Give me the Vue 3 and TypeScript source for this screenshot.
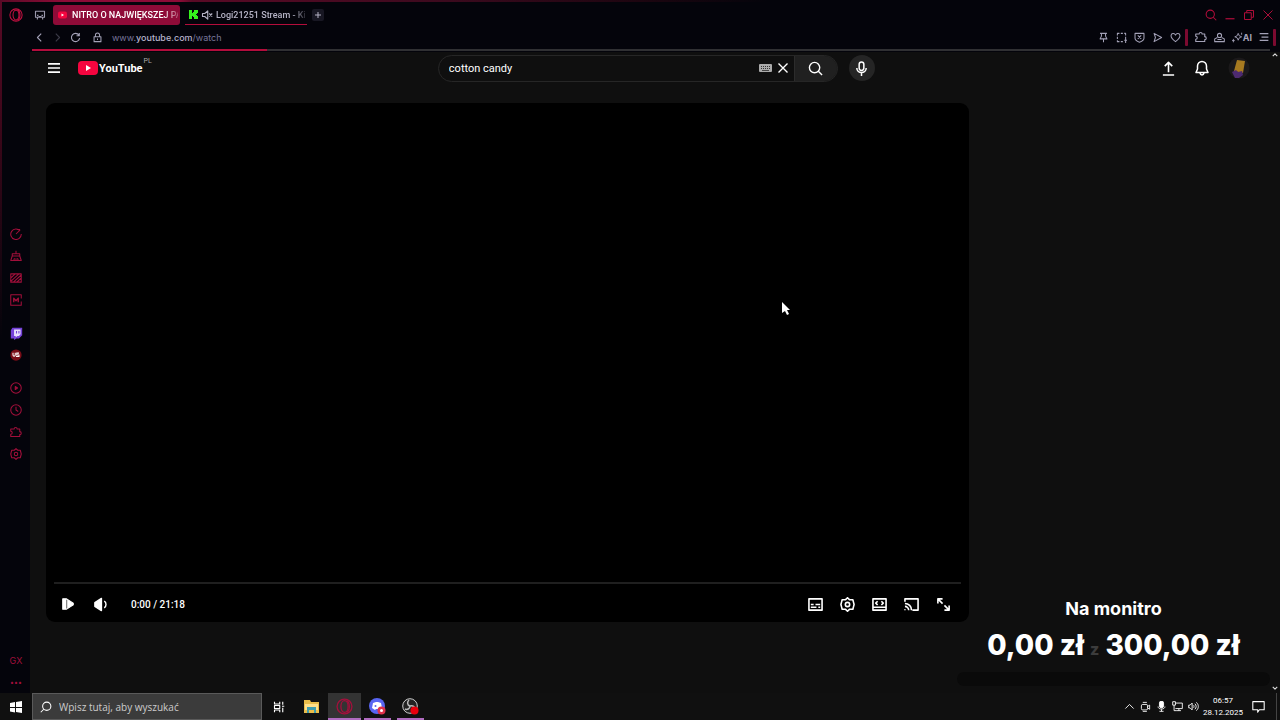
<script setup lang="ts">
import { h, ref } from 'vue'

const shapes: Record<string, string> = {
  opera: '<circle cx="8" cy="8" r="7"/><ellipse cx="8" cy="8" rx="3.4" ry="5.6"/><path d="M10 2.4c3.4 1.6 3.4 9.6 0 11.2"/>',
  workspace: '<path d="M2 3h12v8H2zM4.500 11v3M11.500 11v3M4 8.500h2M10 8.500h2M6 10h4"/>',
  back: '<path d="M10.500 2.500L5 8l5.500 5.500"/>',
  forward: '<path d="M5.500 2.500L11 8l-5.500 5.500"/>',
  reload: '<path d="M13 4.500A6 6 0 1 0 14 9M13.500 1.500v4h-4"/>',
  lock: '<path d="M3 7h10v7H3zM5 7V4.500a3 3 0 0 1 6 0V7M8 9.500v2"/>',
  muted: '<path d="M2 6v4h3l4 3.500v-11L5 6zM11 6l4 4M15 6l-4 4"/>',
  search: '<circle cx="7" cy="7" r="5.500"/><path d="M11 11l4 4"/>',
  minimise: '<path d="M2 13h12"/>',
  restore: '<path d="M2 5h9v9H2zM5 5V2h9v9h-3"/>',
  close: '<path d="M2 2l12 12M14 2L2 14"/>',
  plus: '<path d="M8 2v12M2 8h12"/>',
  pin: '<path d="M3 2h10M5 2v4L3 10h10l-2-4V2M8 10v5"/>',
  snapshot: '<path d="M2 5V2h3M7 2h3M12 2h2v3M14 7v3M2 7v3M2 12v2h3M7 14h3M12 12h4M14 10v6"/>',
  shield: '<path d="M1.500 2h13v7c0 3-3 4.500-6.500 6-3.500-1.500-6.500-3-6.500-6zM5.500 5l5 5M10.500 5l-5 5"/>',
  send: '<path d="M3 2l11 6-11 6 2-6z"/>',
  heart: '<path d="M8 14C4 11 1.500 8.500 1.500 5.500c0-4 5-4.500 6.500-1 1.500-3.500 6.500-3 6.500 1C14.500 8.500 12 11 8 14z"/>',
  puzzle: '<path d="M1 4h4.500a2 2 0 1 1 4 0H13v3.500a2 2 0 1 1 0 4V14H1v-3a2 2 0 0 0 0-4z"/>',
  profile: '<circle cx="8" cy="5" r="3"/><path d="M5 8l-4 2v4h14v-4l-4-2M5 11h6"/>',
  sparkle: '<path d="M9 2l1.500 3.500L14 7l-3.500 1.500L9 12 7.500 8.500 4 7l3.500-1.500zM2 10v5M0 12.500h4M14 1v3"/>',
  lines: '<path d="M1 2.500h14M4 8h11M1 13.500h14"/>',
  menu: '<path d="M0 2.500h16M0 8h16M0 13.500h16"/>',
  upload: '<path d="M8 12V2M4 5.500L8 1.500l4 4M2 15h12"/>',
  bell: '<path d="M8 1.500a4.500 4.500 0 0 0-4.500 4.500v3L2 12.500h12L12.500 9V6A4.500 4.500 0 0 0 8 1.500zM6 13c.5 2.500 3.500 2.500 4 0"/>',
  mic: '<rect x="5.500" y="1" width="5" height="9" rx="2.500"/><path d="M3 7.500c0 6.500 10 6.500 10 0M8 12.500V16"/>',
  gauge: '<path d="M13.500 4A7 7 0 1 0 15 8M8 8l5-5M9 2h4.500"/>',
  cleaner: '<path d="M8 1v4M3 5h10v3H3zM3 8l-2 6h14l-2-6M5 14l1-3M8 14v-3M11 14l-1-3"/>',
  blocks: '<path d="M1 2.500h14v11H1zM1 8l6-5.500M1 12.500L12 2.500M4.500 13.500L15 4M9 13.500l6-5.500"/>',
  mods: '<path d="M15 10v5H1V1h14v5"/><path d="M5 11V5.500L8 9l3-3.500V11" stroke-width="1.800"/>',
  player: '<circle cx="8" cy="8" r="7"/><path d="M7 6l3 2-3 2z" fill="currentColor"/>',
  history: '<circle cx="8" cy="8" r="7"/><path d="M8 3.500V8l3 2"/>',
  gear: '<path d="M8 .8l2.300 2.200h3.400l.8 3L15 8l-.5 2-.8 3h-3.400L8 15.200 5.700 13H2.300l-.8-3L1 8l.5-2 .8-3h3.400z"/><circle cx="8" cy="8" r="2.300"/>',
  play: '<path d="M2 2h4v12H2zM6 2l8 5v2l-8 5z" fill="currentColor"/><path d="M6.500 3v10" stroke="#777"/>',
  volume: '<path d="M9 1.500v13L2 10V6z" fill="currentColor"/><path d="M12 4.500c2.500 1.500 2.500 5.500 0 7"/>',
  captions: '<path d="M1 2h14v12H1zM3 8h3M8 8h5M3 11h6M11 11h2"/>',
  theatre: '<path d="M1 2h14v9H1zM1 14h14v-3H1zM6 4.500L4 6.500l2 2M10 4.500l2 2-2 2"/>',
  cast: '<path d="M1 5V2h14v12H9M1 7c4 0 7 3 7 7M1 10c2 0 4 2 4 4M1 13v1"/>',
  expand: '<path d="M2 7V2h5M2 2l5 5M14 9v5H9M14 14L9 9"/>',
  taskview: '<path d="M2 1v3h7V1M2 15v-3h7v3M2 6h7v4H2zM13 1v4M13 9v6M12 7h3"/>',
  up: '<path d="M2 11l6-6 6 6"/>',
  down: '<path d="M2 5l6 6 6-6"/>',
  device: '<rect x="2" y="5" width="9" height="8" rx="2"/><path d="M11 8l3-2v6l-3-2M4 2h6M4 15.500h6"/>',
  mictray: '<rect x="5" y="0" width="6" height="10" rx="3" fill="currentColor"/><path d="M3 8c0 5 10 5 10 0M8 12v3M5 15h6"/>',
  network: '<path d="M5 3h10v8H5M1 1h4v5H1zM3 6v8h4M10 11v3M7 14h6"/>',
  sound: '<path d="M1 6v4h2l3 3V3L3 6zM8 6c1 1 1 3 0 4M10 4c2.500 2 2.500 6 0 8M12 2c4 3 4 9 0 12"/>',
  notice: '<path d="M1 2h14v10H9l-2 3v-3H1z"/>',
}

const Icon = (p: { name: string; size?: number; weight?: number }) =>
  h('svg', {
    viewBox: '0 0 16 16', width: p.size ?? 12, height: p.size ?? 12, fill: 'none', stroke: 'currentColor',
    'stroke-width': p.weight ?? 1.3, 'stroke-linejoin': 'round', 'aria-hidden': 'true', innerHTML: shapes[p.name],
  })
Icon.props = ['name', 'size', 'weight']

const query = ref('cotton candy')
const taskQuery = ref('')
const sideTools = [['gauge', 'GX Control'], ['cleaner', 'GX Cleaner'], ['blocks', 'GX Corner'], ['mods', 'GX Mods']]
const sideLinks = [['player', 'Odtwarzacz'], ['history', 'Historia'], ['puzzle', 'Rozszerzenia'], ['gear', 'Ustawienia']]
const pageTools = [['pin', 'Przypnij'], ['snapshot', 'Zrzut'], ['shield', 'Ochrona'], ['send', 'Wyślij'], ['heart', 'Ulubione']]
const playerTools = [['captions', 'Napisy'], ['gear', 'Ustawienia'], ['theatre', 'Tryb kinowy'], ['cast', 'Przesyłaj'], ['expand', 'Pełny ekran']]
const tray = [['up', 'Ukryte ikony'], ['device', 'Kamera'], ['mictray', 'Mikrofon'], ['network', 'Sieć'], ['sound', 'Głośność']]
</script>

<template>
  <div class="desktop">
    <div class="browser">
      <aside class="sidebar">
        <button class="opera" aria-label="Opera"><Icon name="opera" :size="14" :weight="1.2" /></button>
        <nav class="tools">
          <div class="group">
            <button v-for="t in sideTools" :key="t[0]" :aria-label="t[1]"><Icon :name="t[0]" :weight="1.4" /></button>
          </div>
          <div class="group">
            <button aria-label="Twitch">
              <svg width="13" height="13" viewBox="0 0 16 16"><path d="M3 1h12v9l-4 4H8l-3 2v-2H1V4z" fill="#7441d8" /><path d="M5 3h8v6l-2 2H9l-2 2v-2H5z" fill="#e8defc" /><path d="M8 5v3M11 5v3" stroke="#7441d8" stroke-width="1.300" /></svg>
            </button>
            <button aria-label="Aplikacja">
              <svg width="12" height="12" viewBox="0 0 16 16"><circle cx="8" cy="8" r="7.500" fill="#790d18" /><path d="M4 5v3c0 2 3 2 3 0V5M12 5.500H9v2.500h3v2H8" fill="none" stroke="#fff" stroke-width="1.400" /></svg>
            </button>
          </div>
          <div class="group">
            <button v-for="t in sideLinks" :key="t[0]" :aria-label="t[1]"><Icon :name="t[0]" :weight="1.4" /></button>
          </div>
        </nav>
        <div class="side-end">
          <button class="gx">GX</button>
          <button class="gx">•••</button>
        </div>
      </aside>

      <div class="window">
        <div class="tabs">
          <button class="space" aria-label="Obszar roboczy"><Icon name="workspace" :weight="1.5" /></button>
          <button class="tab active">
            <svg width="9" height="8" viewBox="0 0 18 14"><rect width="18" height="14" rx="4" fill="#f5053f" /><path d="M7 4l5 3-5 3z" fill="#fff" /></svg>
            <span>NITRO O NAJWIĘKSZEJ PA</span>
          </button>
          <button class="tab">
            <svg width="9" height="9" viewBox="0 0 9 9"><path d="M0 0h3v3h1V2h1V0h4v3H8v1H7v1h1v1h1v3H5V7H4V6H3v3H0z" fill="#35f21c" /></svg>
            <Icon name="muted" :size="12" :weight="1.5" />
            <span>Logi21251 Stream - Kic</span>
          </button>
          <button class="new-tab" aria-label="Nowa karta"><Icon name="plus" :size="8" :weight="2" /></button>
          <div class="controls">
            <button aria-label="Szukaj"><Icon name="search" :weight="1.4" /></button>
            <button aria-label="Minimalizuj"><Icon name="minimise" :weight="1.6" /></button>
            <button aria-label="Przywróć"><Icon name="restore" /></button>
            <button aria-label="Zamknij"><Icon name="close" /></button>
          </div>
        </div>

        <div class="address">
          <button aria-label="Wstecz"><Icon name="back" :size="11" :weight="1.6" /></button>
          <button class="dim" aria-label="Dalej"><Icon name="forward" :size="11" :weight="1.6" /></button>
          <button aria-label="Odśwież"><Icon name="reload" :size="11" :weight="1.6" /></button>
          <button class="lock" aria-label="Bezpieczeństwo"><Icon name="lock" :size="11" :weight="1.5" /></button>
          <a class="url" href="#">www.<b>youtube.com</b>/watch</a>
          <div class="page-tools">
            <button v-for="t in pageTools" :key="t[0]" :aria-label="t[1]"><Icon :name="t[0]" :size="11" :weight="1.5" /></button>
            <i class="mark"></i>
            <button class="after" aria-label="Rozszerzenia"><Icon name="puzzle" :weight="1.5" /></button>
            <button aria-label="Profil"><Icon name="profile" :size="11" :weight="1.5" /></button>
            <button class="ai"><Icon name="sparkle" :size="11" />AI</button>
            <button aria-label="Menu"><Icon name="lines" :size="10" :weight="2" /></button>
            <i class="mark"></i>
          </div>
        </div>
        <div class="loading"><i></i></div>

        <div class="viewport">
          <div class="page">
            <header class="masthead">
              <div class="brand">
                <button aria-label="Menu"><Icon name="menu" :weight="2.2" /></button>
                <a href="#" class="logo">
                  <svg width="20" height="14" viewBox="0 0 20 14"><rect width="20" height="14" rx="4" fill="#f5053f" /><path d="M8 4l5 3-5 3z" fill="#fff" /></svg>
                  <span>YouTube</span><sup>PL</sup>
                </a>
              </div>
              <form class="finder" @submit.prevent>
                <div class="field">
                  <input v-model="query" type="text" aria-label="Szukaj" />
                  <svg width="13" height="8" viewBox="0 0 13 8"><rect width="13" height="8" rx="1" fill="#aaa" /><path d="M2 2.500h9M2 4.500h9" stroke="#333" stroke-dasharray="1 1" /><path d="M3 6.500h7" stroke="#444" /></svg>
                  <button type="button" class="clear" aria-label="Wyczyść"><Icon name="close" :size="12" :weight="1.8" /></button>
                  <button class="go" aria-label="Szukaj"><Icon name="search" :size="15" :weight="1.5" /></button>
                </div>
                <button type="button" class="voice" aria-label="Szukaj głosowo"><Icon name="mic" :size="15" :weight="1.6" /></button>
              </form>
              <div class="account">
                <button aria-label="Prześlij"><Icon name="upload" :size="15" :weight="1.7" /></button>
                <button aria-label="Powiadomienia"><Icon name="bell" :size="16" :weight="1.5" /></button>
                <button aria-label="Konto">
                  <svg width="22" height="22" viewBox="0 0 22 22"><circle cx="11" cy="11" r="10.500" fill="#1b191a" /><path d="M9 3l8 1-2 12-9-2z" fill="#a77a20" /><path d="M4 15l4-2 2 2 4-1 1 4-4 3H7z" fill="#4d2a70" /></svg>
                </button>
              </div>
            </header>

            <section class="player">
              <div class="track"></div>
              <div class="deck">
                <button aria-label="Odtwórz"><Icon name="play" :size="14" /></button>
                <button aria-label="Głośność"><Icon name="volume" :size="15" :weight="1.5" /></button>
                <span class="time">0:00 / 21:18</span>
                <div class="options">
                  <button v-for="t in playerTools" :key="t[0]" :aria-label="t[1]"><Icon :name="t[0]" :size="15" :weight="1.7" /></button>
                </div>
              </div>
            </section>
          </div>
          <div class="scroll"><Icon name="up" :size="6" :weight="3" /><Icon name="down" :size="6" :weight="3" /></div>
        </div>
      </div>

      <div class="goal">
        <h2>Na monitro</h2>
        <p>0,00 zł <small>z</small> 300,00 zł</p>
        <div class="meter"></div>
      </div>
    </div>

    <footer class="taskbar">
      <button class="start" aria-label="Start">
        <svg width="12" height="12" viewBox="0 0 12 12" fill="#fff"><path d="M0 2l5-1v5H0zM6 1l6-1v6H6zM0 7h5v4.500l-5-1zM6 7h6v5l-6-1z" /></svg>
      </button>
      <label class="lookup">
        <Icon class="lens" name="search" :size="12" :weight="1.4" />
        <input v-model="taskQuery" type="text" placeholder="Wpisz tutaj, aby wyszukać" aria-label="Wyszukaj" />
      </label>
      <button class="app" aria-label="Widok zadań"><Icon name="taskview" :weight="1.5" /></button>
      <button class="app" aria-label="Eksplorator">
        <svg width="15" height="13" viewBox="0 0 15 13"><path d="M0 0h6l1 2h8v11H0z" fill="#e9bd4a" /><path d="M1 4h13v6H1z" fill="#ffe08a" /><path d="M3 7h9v6h-2v-3H5v3H3z" fill="#3f9dae" /></svg>
      </button>
      <button class="app open current" aria-label="Opera GX"><Icon class="red" name="opera" :size="17" :weight="1.2" /></button>
      <button class="app open" aria-label="Discord">
        <svg width="17" height="17" viewBox="0 0 17 17"><circle cx="8" cy="8" r="8" fill="#5865f2" /><path d="M4 5l3-1h2l3 1 1 5-3 2-1-1H7l-1 1-3-2z" fill="#fff" /><circle cx="6.500" cy="8" r="1" fill="#5865f2" /><circle cx="12.500" cy="12.500" r="4" fill="#e0324b" /><circle cx="12.500" cy="12.500" r="1.500" fill="#fff" /></svg>
      </button>
      <button class="app open" aria-label="OBS Studio">
        <svg width="17" height="17" viewBox="0 0 17 17"><circle cx="8" cy="8" r="7.300" fill="#222" stroke="#ccc" /><path d="M8 8c-3-1-3-4-1-6M8 8c3-1 5 1 5 3M8 8c0 3-3 4-5 3" fill="none" stroke="#bbb" stroke-width="1.500" /><circle cx="12.500" cy="12.500" r="4" fill="#e8000c" /></svg>
      </button>
      <div class="tray">
        <button v-for="t in tray" :key="t[0]" :aria-label="t[1]"><Icon :name="t[0]" :size="11" /></button>
        <button class="clock"><span>06:57</span><span>28.12.2025</span></button>
        <button class="notice" aria-label="Powiadomienia"><Icon name="notice" :size="13" /></button>
        <i class="peek"></i>
      </div>
    </footer>

    <svg class="pointer" width="8" height="13" viewBox="0 0 8 13"><path d="M0 0l8 8H5l2 4-2 1-2-4-3 2z" fill="#fff" /></svg>
  </div>
</template>

<style>
body { margin: 0; background: #0f0f0f; }
</style>

<style scoped>
.desktop { position: relative; display: flex; flex-direction: column; min-height: 100vh; color: #fff; font-family: Roboto, "Liberation Sans", sans-serif; font-size: 11px; }
.desktop *, .desktop { box-sizing: border-box; }
button { display: flex; align-items: center; justify-content: center; flex: none; padding: 0; border: 0; background: none; color: inherit; font: inherit; }
input { min-width: 0; flex: 1; padding: 0; border: 0; outline: 0; background: none; color: inherit; font: inherit; }
svg { flex: none; display: block; }
a { color: inherit; text-decoration: none; }
.pointer { position: absolute; left: 782px; top: 302px; pointer-events: none; }

.browser { position: relative; display: flex; flex: 1; background: #04040b; }
.browser::before { content: ""; position: absolute; inset: 0 0 auto; height: 2px; background: linear-gradient(90deg, #5a0a26 0, #8d0b37 5%, #8d0b37 14%, #5a0a26 15%, #3c0a1e 35%, #1d0510 50%, #04040b 60%); }
.browser::after { content: ""; position: absolute; inset: 0 auto auto 0; width: 2px; height: 340px; background: linear-gradient(#5a0a26, #3a0719 40%, #04040b); }
.sidebar { display: flex; flex-direction: column; flex: none; width: 30px; padding-left: 2px; color: #a20f3b; }
.sidebar button { width: 28px; height: 22px; }
.sidebar .opera { height: 30px; color: #c01040; }
.tools { display: flex; flex-direction: column; gap: 11px; padding-top: 193px; }
.side-end { margin-top: auto; }
.gx { font: 9px Inter, sans-serif; }
.side-end .gx + .gx { font-size: 7px; }

.window { display: flex; flex-direction: column; flex: 1; min-width: 0; }
.tabs { display: flex; align-items: center; height: 27px; padding: 3px 6px 0 0; font: 500 9px Roboto, sans-serif; color: #b6b4c6; }
.space { width: 20px; margin-right: 3px; color: #9a98ac; }
.tab { gap: 3px; width: 122px; height: 20px; margin-right: 5px; padding: 0 2px 0 4px; justify-content: flex-start; border-bottom: 1px solid #b30d3b; white-space: nowrap; }
.tab span { flex: 1; min-width: 0; text-align: left; mask-image: linear-gradient(90deg, #000 85%, transparent 105%); }
.tab.active { width: 127px; gap: 5px; padding-left: 5px; border: 0; border-radius: 3px; background: #8f0b38; color: #fff; }
.new-tab { width: 12px; height: 12px; border-radius: 2px; background: #181723; }
.controls { display: flex; gap: 7px; margin-left: auto; color: #b30d3b; }
.address { display: flex; align-items: center; height: 20px; color: #a4a2b8; }
.address > button { width: 18px; }
.address > .dim { color: #3c3b48; }
.address > .lock { width: 26px; }
.url { margin-left: 2px; font: 9px Inter, sans-serif; color: #77749a; }
.url b { font-weight: 500; color: #b6b3cc; }
.page-tools { display: flex; align-items: center; gap: 7px; margin-left: auto; padding-right: 4px; }
.mark { width: 3px; height: 17px; margin-left: -3px; border-radius: 1px; background: #7c0a30; }
.ai { font: 700 9px Inter, sans-serif; }
.loading { height: 3px; margin: 2px 10px 0 2px; border-top: 2px solid #303033; }
.loading i { display: block; width: 19%; height: 2px; margin-top: -2px; background: #b30d3b; }

.viewport { display: flex; flex: 1; background: #0f0f0f; }
.page { display: flex; flex-direction: column; flex: 1; min-width: 0; }
.masthead { display: flex; align-items: center; justify-content: space-between; height: 32px; padding: 0 20px 0 18px; }
.brand, .logo, .finder, .field, .account { display: flex; align-items: center; }
.brand { gap: 18px; }
.logo { font: 700 11px Roboto, sans-serif; }
.logo span { margin-left: 1px; }
.logo sup { align-self: flex-start; margin: -4px 0 0 1px; font: 7px Roboto, sans-serif; color: #aaa; }
.finder { gap: 11px; }
.field { width: 400px; height: 27px; border: 1px solid #262626; border-radius: 14px; overflow: hidden; }
.field input { padding-left: 10px; }
.clear { width: 22px; }
.go { width: 43px; height: 27px; border-left: 1px solid #2c2c2c; background: #202020; }
.voice { width: 26px; height: 26px; border-radius: 50%; background: #252525; }
.account { gap: 18px; }

.player { display: flex; flex-direction: column; justify-content: flex-end; width: calc(100% - 317px); aspect-ratio: 16 / 9; margin: 19px 0 0 16px; padding: 0 8px 1px; border-radius: 9px; background: #000; }
.track { height: 2px; background: #1f1f1f; }
.deck { display: flex; align-items: center; height: 34px; margin-top: 3px; }
.deck button { width: 32px; height: 32px; }
.deck > button { margin-right: 1px; margin-left: -1px; }
.deck > button:first-child { margin-left: -2px; }
.time { margin-left: 14px; font-size: 10px; font-weight: 500; }
.options { display: flex; margin-left: auto; padding-right: 2px; }
.scroll { display: flex; flex-direction: column; justify-content: space-between; align-items: center; width: 10px; padding: 0 0 2px; color: #ddd; }

.goal { position: absolute; right: 10px; bottom: 7px; width: 313px; text-align: center; font-family: Inter, sans-serif; }
.goal h2 { margin: 0; font-size: 18px; line-height: 24px; font-weight: 700; }
.goal p { margin: 4px 0 0; font-size: 28px; line-height: 40px; font-weight: 800; white-space: nowrap; }
.goal small { font-size: 16px; color: #3c3c3c; }
.meter { height: 14px; margin-top: 3px; border-radius: 7px; background: #0a0a0a; }

.taskbar { display: flex; height: 27px; background: #101010; font-family: "Open Sans", sans-serif; }
.start { width: 32px; }
.lookup { display: flex; align-items: center; gap: 7px; width: 230px; padding: 0 7px; border: 1px solid #5a5a5a; background: #3b3b3b; font-size: 10px; }
.lookup input::placeholder { color: #ccc; opacity: 1; }
.lens { transform: scaleX(-1); }
.app { position: relative; width: 33px; }
.open::after { content: ""; position: absolute; inset: auto 3px 0; height: 2px; background: #b06cc0; }
.current { background: #333; }
.current::after { inset: auto 0 0; }
.red { color: #a50f3c; }
.tray { display: flex; margin-left: auto; }
.tray button { width: 16px; }
.tray .clock { flex-direction: column; width: 36px; margin-left: 4px; font: 8px/12px Roboto, sans-serif; }
.tray .notice { width: 35px; }
.peek { width: 4px; border-left: 1px solid #444; }
</style>
